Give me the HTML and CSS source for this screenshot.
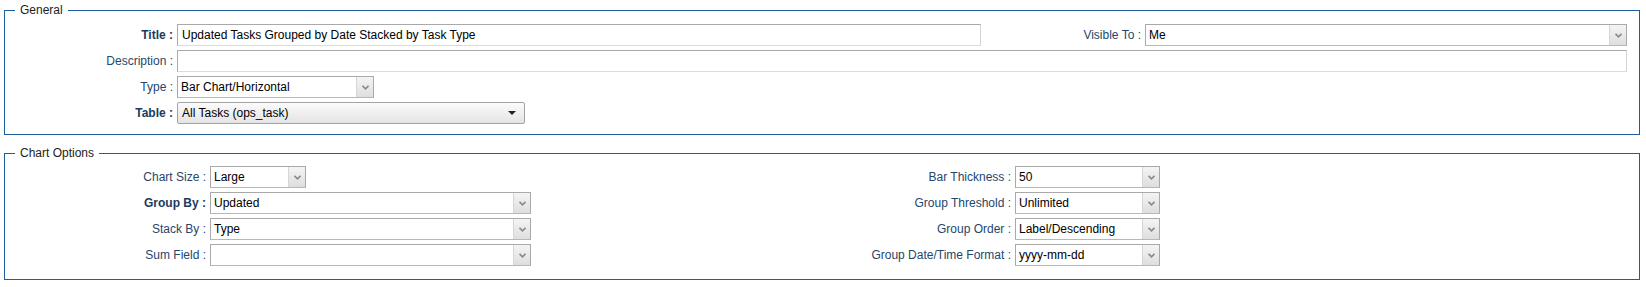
FILE: index.html
```html
<!DOCTYPE html>
<html>
<head>
<meta charset="utf-8">
<title>Report</title>
<link rel="stylesheet" href="styles.css">
</head>
<body>
<fieldset class="box">
  <legend class="box-legend">General</legend>
  <div class="grid grid-general">
    <label class="lbl bold">Title :</label>
    <div class="input">Updated Tasks Grouped by Date Stacked by Task Type</div>
    <label class="lbl">Visible To :</label>
    <div class="select"><span class="val">Me</span><span class="arrow"><svg width="7" height="5" viewBox="0 0 7 5"><path d="M0.5 0.8 L3.5 3.8 L6.5 0.8" fill="none" stroke="#8a8a8a" stroke-width="1.6"/></svg></span></div>

    <label class="lbl">Description :</label>
    <div class="input span3"></div>

    <label class="lbl">Type :</label>
    <div class="cell"><div class="select w-type"><span class="val">Bar Chart/Horizontal</span><span class="arrow"><svg width="7" height="5" viewBox="0 0 7 5"><path d="M0.5 0.8 L3.5 3.8 L6.5 0.8" fill="none" stroke="#8a8a8a" stroke-width="1.6"/></svg></span></div></div>
    <span class="fill"></span>

    <label class="lbl bold">Table :</label>
    <div class="cell"><div class="native w-table"><span class="val">All Tasks (ops_task)</span><span class="tri"></span></div></div>
    <span class="fill"></span>
  </div>
</fieldset>

<fieldset class="box box-chart">
  <legend class="box-legend">Chart Options</legend>
  <div class="grid grid-chart">
    <label class="lbl">Chart Size :</label>
    <div class="cell"><div class="select w-size"><span class="val">Large</span><span class="arrow"><svg width="7" height="5" viewBox="0 0 7 5"><path d="M0.5 0.8 L3.5 3.8 L6.5 0.8" fill="none" stroke="#8a8a8a" stroke-width="1.6"/></svg></span></div></div>
    <label class="lbl">Bar Thickness :</label>
    <div class="select"><span class="val">50</span><span class="arrow"><svg width="7" height="5" viewBox="0 0 7 5"><path d="M0.5 0.8 L3.5 3.8 L6.5 0.8" fill="none" stroke="#8a8a8a" stroke-width="1.6"/></svg></span></div>

    <label class="lbl bold">Group By :</label>
    <div class="select"><span class="val">Updated</span><span class="arrow"><svg width="7" height="5" viewBox="0 0 7 5"><path d="M0.5 0.8 L3.5 3.8 L6.5 0.8" fill="none" stroke="#8a8a8a" stroke-width="1.6"/></svg></span></div>
    <label class="lbl">Group Threshold :</label>
    <div class="select"><span class="val">Unlimited</span><span class="arrow"><svg width="7" height="5" viewBox="0 0 7 5"><path d="M0.5 0.8 L3.5 3.8 L6.5 0.8" fill="none" stroke="#8a8a8a" stroke-width="1.6"/></svg></span></div>

    <label class="lbl">Stack By :</label>
    <div class="select"><span class="val">Type</span><span class="arrow"><svg width="7" height="5" viewBox="0 0 7 5"><path d="M0.5 0.8 L3.5 3.8 L6.5 0.8" fill="none" stroke="#8a8a8a" stroke-width="1.6"/></svg></span></div>
    <label class="lbl">Group Order :</label>
    <div class="select"><span class="val">Label/Descending</span><span class="arrow"><svg width="7" height="5" viewBox="0 0 7 5"><path d="M0.5 0.8 L3.5 3.8 L6.5 0.8" fill="none" stroke="#8a8a8a" stroke-width="1.6"/></svg></span></div>

    <label class="lbl">Sum Field :</label>
    <div class="select"><span class="val"></span><span class="arrow"><svg width="7" height="5" viewBox="0 0 7 5"><path d="M0.5 0.8 L3.5 3.8 L6.5 0.8" fill="none" stroke="#8a8a8a" stroke-width="1.6"/></svg></span></div>
    <label class="lbl">Group Date/Time Format :</label>
    <div class="select"><span class="val">yyyy-mm-dd</span><span class="arrow"><svg width="7" height="5" viewBox="0 0 7 5"><path d="M0.5 0.8 L3.5 3.8 L6.5 0.8" fill="none" stroke="#8a8a8a" stroke-width="1.6"/></svg></span></div>
  </div>
</fieldset>
</body>
</html>
```

FILE: styles.css
```css
html, body {
  margin: 0;
  padding: 0;
  background: #ffffff;
}

body {
  padding: 3px 6px 0 4px;
  font-family: "Liberation Sans", Arial, sans-serif;
  font-size: 12px;
  color: #000;
}

.box {
  margin: 0;
  border: 1px solid #1f5c9e;
  padding: 6px 12px 10px 0;
  min-width: 0;
}

.box-chart {
  margin-top: 11px;
  padding-top: 5px;
  padding-bottom: 13px;
}

.box-legend {
  margin-left: 10px;
  padding: 0 5px;
  color: #1c1c1c;
  font-size: 12px;
  line-height: 15px;
}

.grid {
  display: grid;
  column-gap: 4px;
  row-gap: 4px;
  grid-auto-rows: 22px;
  align-items: center;
}

.grid-general {
  grid-template-columns: 168px 804px 156px 1fr;
}

.grid-chart {
  grid-template-columns: 201px 321px 476px 145px;
}

.lbl {
  text-align: right;
  color: #26466c;
  white-space: nowrap;
}

.bold {
  font-weight: bold;
  color: #1c3a5e;
}

.cell {
  height: 22px;
  display: flex;
}

.fill {
  grid-column: span 2;
}

.span3 {
  grid-column: span 3;
}

.input {
  height: 22px;
  box-sizing: border-box;
  border: 1px solid #a9a9a9;
  border-bottom-color: #dcdcdc;
  border-right-color: #d4d4d4;
  padding: 0 4px;
  line-height: 20px;
  background: #fff;
  white-space: nowrap;
  overflow: hidden;
}

.select {
  height: 22px;
  box-sizing: border-box;
  border: 1px solid #a9a9a9;
  border-bottom-color: #b8b8b8;
  display: flex;
  align-items: stretch;
  background: #fff;
}

.select .val {
  flex: 1;
  padding-left: 3px;
  line-height: 20px;
  white-space: nowrap;
  overflow: hidden;
}

.select .arrow {
  width: 16px;
  border-left: 1px solid #d6d6d6;
  background: linear-gradient(#f4f4f4, #dedede);
  display: flex;
  align-items: center;
  justify-content: center;
}

.w-type { width: 197px; }
.w-size { width: 96px; }

.native {
  height: 22px;
  box-sizing: border-box;
  border: 1px solid #a3a3a3;
  border-radius: 2px;
  background: linear-gradient(#fbfbfb, #e4e4e4);
  display: flex;
  align-items: center;
  padding: 0 8px 0 4px;
}

.w-table { width: 348px; }

.native .val {
  flex: 1;
  line-height: 20px;
  white-space: nowrap;
}

.native .tri {
  width: 0;
  height: 0;
  border-left: 4px solid transparent;
  border-right: 4px solid transparent;
  border-top: 4px solid #222;
}
```
